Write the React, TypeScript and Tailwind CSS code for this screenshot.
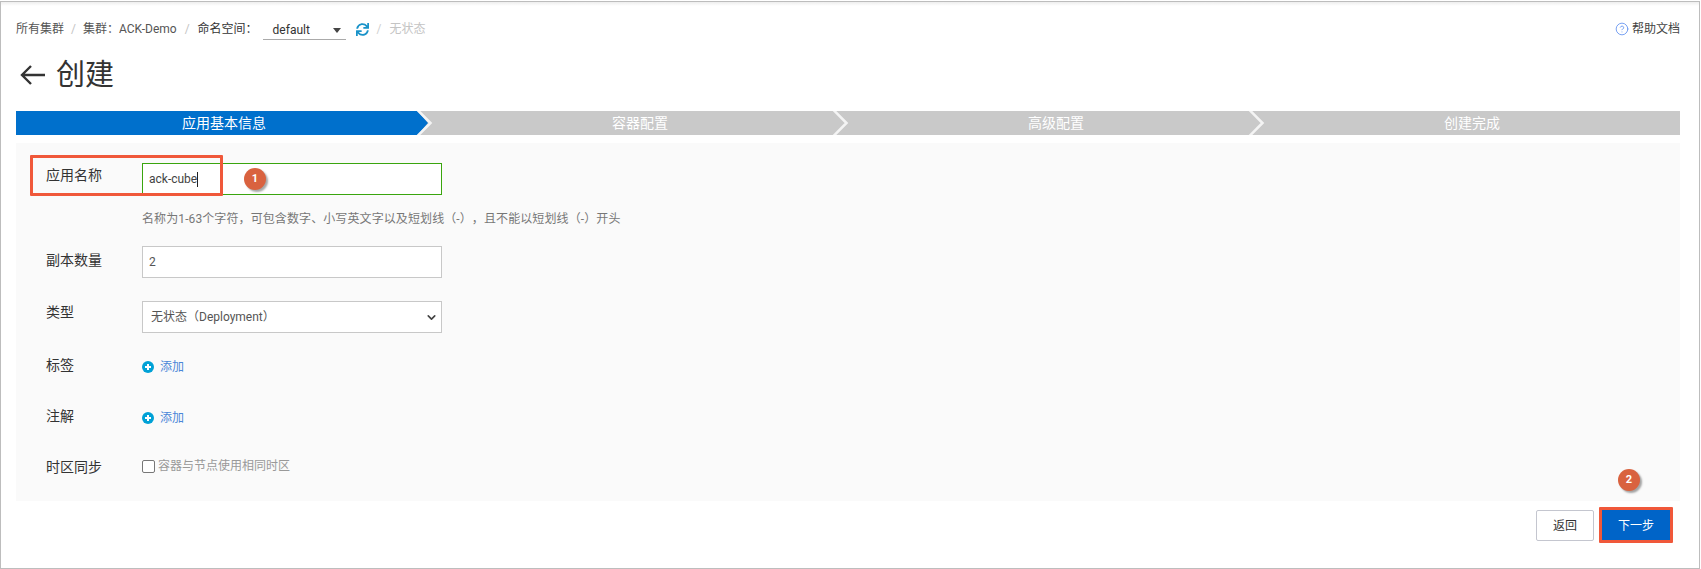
import { ChevronDown, CircleHelp } from "lucide-react";
import { FaSync } from "react-icons/fa";
import { ReactNode } from "react";

const font = {
  fontFamily: 'Roboto, "Noto Sans CJK SC", sans-serif',
};

function Step({ label, active, last }: { label: string; active?: boolean; last?: boolean }) {
  return (
    <div
      className={`relative flex-1 h-full flex items-center justify-center text-[14px] text-white ${
        active ? "bg-[#0070cc]" : "bg-[#c9c9c9]"
      }`}
    >
      <span>{label}</span>
      {!last ? (
        <svg className="absolute left-full top-0 z-10 -ml-[16px]" width="32" height="24" viewBox="0 0 32 24">
          {active ? (
            <>
              <rect x="0" y="0" width="16" height="24" fill="#c9c9c9" />
              <path d="M0 0H1.5L12 12L1.5 24H0Z" fill="#0070cc" />
            </>
          ) : null}
          <path d="M1.5 -1L14.5 12L1.5 25" fill="none" stroke="#f4f4f4" strokeWidth="2.5" />
        </svg>
      ) : null}
    </div>
  );
}

function Row({
  label,
  className,
  labelClass,
  children,
}: {
  label: string;
  className: string;
  labelClass?: string;
  children: ReactNode;
}) {
  return (
    <div className={`flex ${className}`}>
      <div className={`w-[96px] shrink-0 pl-[30px] text-[14px] leading-[20px] text-[#333] box-content ${labelClass ?? ""}`}>
        {label}
      </div>
      <div className="ml-[-30px] pl-[30px] flex-1">{children}</div>
    </div>
  );
}

function AddLink() {
  return (
    <div className="flex items-center h-[20px] mt-[2px] gap-[6px] text-[12px] text-[#4a86d8]">
      <svg width="12" height="12" viewBox="0 0 12 12">
        <circle cx="6" cy="6" r="6" fill="#00a1d6" />
        <path d="M6 3V9M3 6H9" stroke="#fff" strokeWidth="2" />
      </svg>
      <span>添加</span>
    </div>
  );
}

function Badge({ n, className }: { n: number; className: string }) {
  return (
    <div
      className={`absolute w-[22px] h-[22px] rounded-full bg-[#d9623f] text-white text-[11px] font-bold flex items-center justify-center shadow-[2px_2px_2px_rgba(0,0,0,0.35)] ${className}`}
    >
      {n}
    </div>
  );
}

export default function App() {
  return (
    <div style={font} className="relative w-[1701px] h-[569px] overflow-hidden bg-white [text-spacing-trim:space-all]">
      <div className="w-[1700px] h-[568px] mt-[1px] border border-[#bdbdbd] flex flex-col">
        <div className="h-[4px] bg-gradient-to-b from-[#eeeeee] to-white" />
        <div className="flex items-center justify-between h-[18px] mt-[14px] pl-[15px] pr-[19px] text-[12px] text-[#555]">
          <div className="flex items-center">
            <span>所有集群</span>
            <span className="mx-[7px] text-[#c4c4c4]">/</span>
            <span>集群：ACK-Demo</span>
            <span className="mx-[8px] text-[#c4c4c4]">/</span>
            <span className="text-[#333]">命名空间：</span>
            <div className="relative ml-[5px] w-[83px] h-[20px] top-[1px] border-b border-[#aaa] flex items-center pl-[10px] text-[#333]">
              default
              <svg className="absolute right-[5px] top-[8px]" width="8" height="5" viewBox="0 0 8 5">
                <path d="M0 0H8L4 5Z" fill="#444" />
              </svg>
            </div>
            <FaSync className="ml-[10px] text-[#1a93c9]" size={13} />
            <span className="mx-[8px] text-[#d0d0d0]">/</span>
            <span className="text-[#c4c4c4]">无状态</span>
          </div>
          <div className="flex items-center gap-[3px] text-[#444]">
            <CircleHelp className="text-[#5b8def]" size={14} strokeWidth={1.4} />
            <span>帮助文档</span>
          </div>
        </div>

        <div className="flex items-center h-[40px] mt-[17px] pl-[19px] text-[#333]">
          <svg width="25" height="20" viewBox="0 0 25 20">
            <path d="M25 10H2M11 1L2 10L11 19" fill="none" stroke="#333" strokeWidth="2.4" />
          </svg>
          <span className="ml-[11px] text-[29px] leading-[40px]">创建</span>
        </div>

        <div className="flex h-[24px] mt-[16px] ml-[15px] mr-[19px]">
          <Step label="应用基本信息" active />
          <Step label="容器配置" />
          <Step label="高级配置" />
          <Step label="创建完成" last />
        </div>

        <div className="flex-1 mt-[8px] ml-[15px] mr-[19px] mb-[67px] bg-[#fafafa]">
          <div className="pt-[20px]">
            <Row label="应用名称" labelClass="pt-[2px]" className="h-[32px]">
              <div className="w-[300px] h-[32px] border border-[#3aa50e] bg-white flex items-center pl-[6px] text-[12px] text-[#444]">
                ack-cube
                <span className="w-[1px] h-[15px] bg-[#222]" />
              </div>
            </Row>
            <div className="ml-[126px] mt-[15px] h-[18px] text-[12px] leading-[18px] tracking-[0.1px] text-[#777]">
              名称为1-63个字符，可包含数字、小写英文字以及短划线（-），且不能以短划线（-）开头
            </div>
            <Row label="副本数量" labelClass="pt-[4px]" className="mt-[18px]">
              <div className="w-[300px] h-[32px] border border-[#c8c8c8] bg-white flex items-center pl-[6px] text-[12px] text-[#555]">
                2
              </div>
            </Row>
            <Row label="类型" labelClass="pt-[1px]" className="mt-[23px]">
              <div className="w-[300px] h-[32px] border border-[#c8c8c8] bg-white flex items-center justify-between pl-[8px] pr-[3px] text-[12px] text-[#555]">
                无状态（Deployment）
                <ChevronDown className="text-[#444]" size={13} strokeWidth={3} />
              </div>
            </Row>
            <Row label="标签" className="mt-[22px]">
              <AddLink />
            </Row>
            <Row label="注解" className="mt-[29px]">
              <AddLink />
            </Row>
            <Row label="时区同步" className="mt-[29px]">
              <div className="flex items-center h-[20px] -mt-[1px] gap-[3px] text-[12px] text-[#999]">
                <span className="w-[13px] h-[13px] rounded-[2px] border border-[#777] bg-white" />
                容器与节点使用相同时区
              </div>
            </Row>
          </div>
        </div>
      </div>

      <div className="absolute right-[30px] bottom-[28px] flex gap-[7px] text-[12px]">
        <div className="w-[58px] h-[31px] rounded-[2px] border border-[#c4c6cf] bg-white text-[#333] flex items-center justify-center">
          返回
        </div>
        <div className="w-[70px] h-[31px] bg-[#0064c8] text-white flex items-center justify-center">下一步</div>
      </div>

      <div className="absolute left-[30px] top-[155px] w-[193px] h-[41px] border-[3px] border-[#f0583a] rounded-[1px]" />
      <div className="absolute left-[1599px] top-[507px] w-[74px] h-[36px] border-[3px] border-[#f0583a] rounded-[1px]" />
      <Badge n={1} className="left-[244px] top-[168px]" />
      <Badge n={2} className="left-[1618px] top-[469px]" />
    </div>
  );
}
